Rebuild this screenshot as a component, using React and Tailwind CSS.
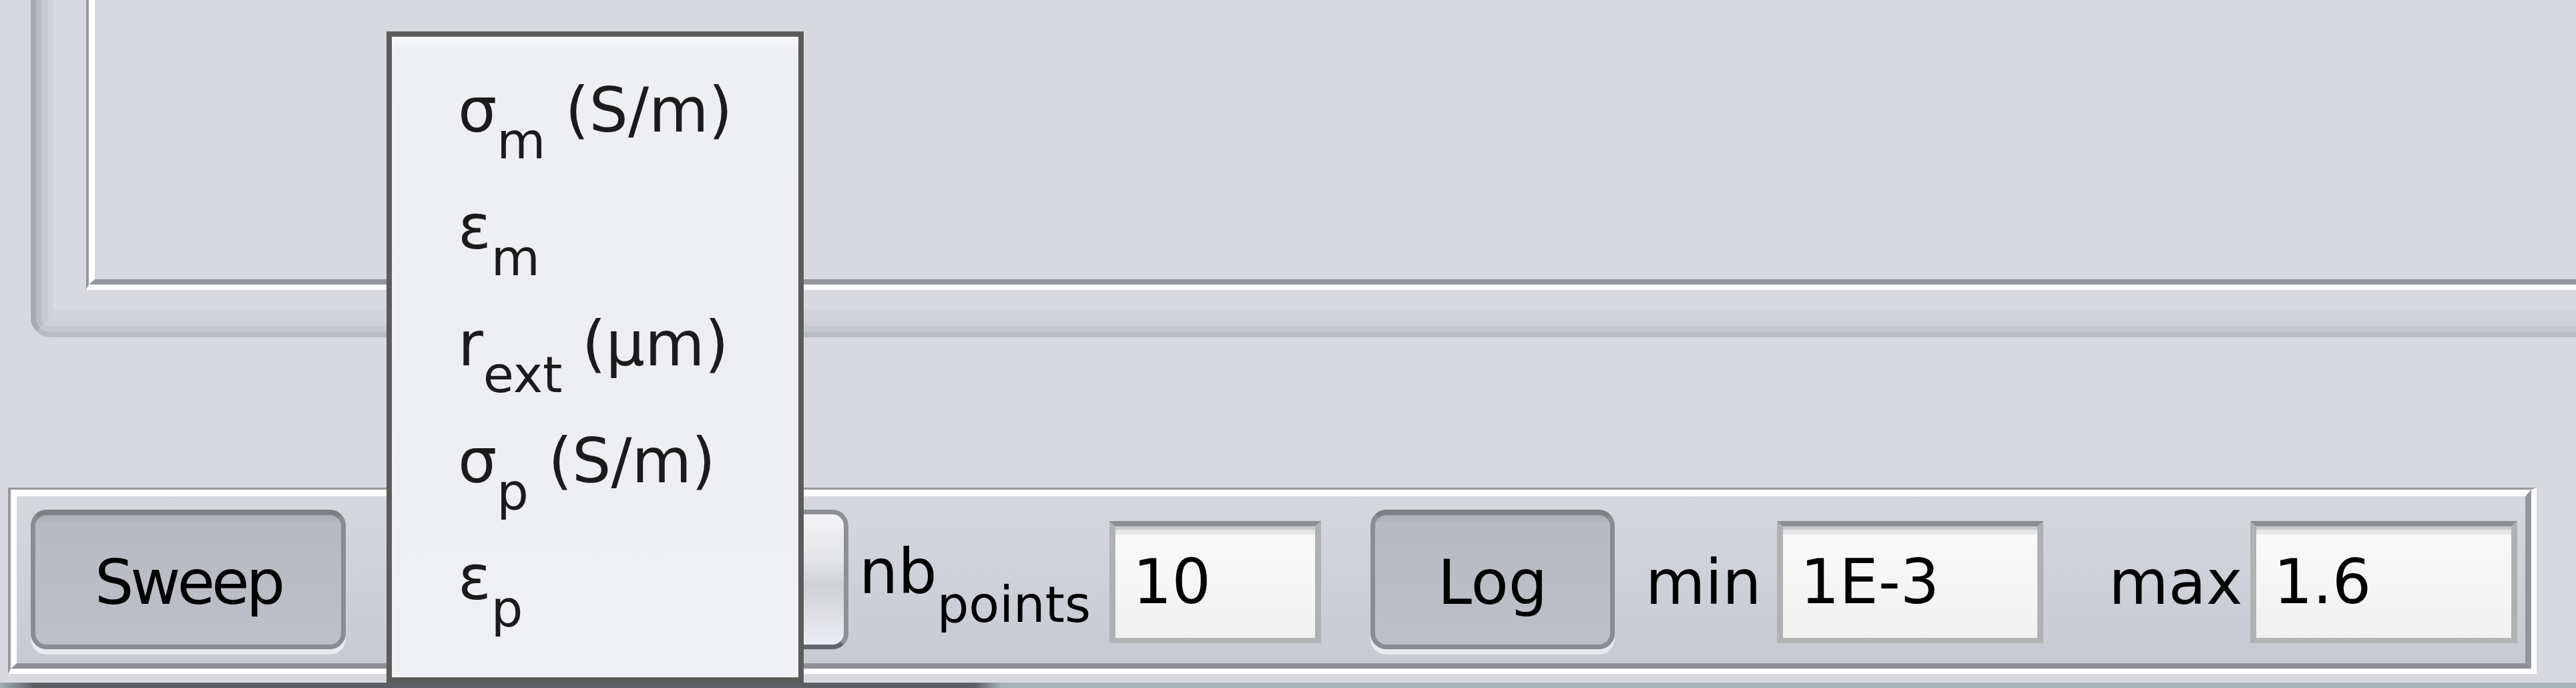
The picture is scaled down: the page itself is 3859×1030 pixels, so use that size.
const font = "font-['DejaVu_Sans',sans-serif]"

const Sub = ({ children }) => (
  <span className="relative top-[40px] text-[75px]">{children}</span>
)

const MenuItem = ({ children }) => (
  <div className="h-[175px] flex items-center pl-[99px] text-[92px] leading-none text-[#1b1b1b] whitespace-nowrap">
    <span>{children}</span>
  </div>
)

const AquaButton = ({ label, className = "" }) => (
  <div
    className={`h-[209px] mb-[8px] shrink-0 rounded-[24px] border-[7px] border-t-8 border-[#8a8c91] border-t-[#7d7f83] bg-[linear-gradient(to_bottom,#a9abb2_0px,#b8bac1_12px,#bec0c7_100%)] shadow-[0_8px_0_0_#e8eaed] flex items-center justify-center pt-[10px] text-[92px] leading-none text-black ${className}`}
  >
    {label}
  </div>
)

const Field = ({ value, className = "" }) => (
  <div
    className={`h-[183px] shrink-0 border-t-8 border-x-[9px] border-b-8 border-t-[#8e8f92] border-x-[#b0b1b3] border-b-[#b5b5b6] bg-[linear-gradient(to_bottom,#fafafa,#f1f1f0)] shadow-[inset_0_5px_0_#cacbcd,inset_0_12px_0_#e5e6e7] flex items-center pl-[26px] text-[92px] leading-none text-black ${className}`}
  >
    {value}
  </div>
)

const Label = ({ children, className = "" }) => (
  <div className={`h-[217px] shrink-0 flex items-center pt-[3px] text-[92px] leading-none text-black whitespace-nowrap ${className}`}>
    <span>{children}</span>
  </div>
)

export default function App() {
  return (
    <div className={`relative w-[3859px] h-[1030px] overflow-hidden bg-[#d8d9de] ${font}`}>
      {/* upper tab area with bevelled frame */}
      <div className="h-[505px] pl-[46px]">
        <div className="h-full rounded-bl-[30px] border-l-8 border-b-8 border-l-[#a9aab0] border-b-[#b9bbc2]">
          <div className="h-full rounded-bl-[22px] border-l-8 border-b-[9px] border-l-[#babcc3] border-b-[#c6c8ce]">
            <div className="h-full rounded-bl-[14px] border-l-[9px] border-b-8 border-l-[#c8c9d0] border-b-[#cfd0d6]">
              <div className="h-full rounded-bl-[6px] border-l-8 border-b-[17px] border-l-[#d0d1d6] border-b-[#d3d4da] pl-[50px] pb-[29px]">
                <div className="h-full border-l-4 border-b-8 border-l-[#95989d] border-b-white">
                  <div className="h-full border-l-[9px] border-b-8 border-l-white border-b-[#95989d] bg-[#d8d9de]" />
                </div>
              </div>
            </div>
          </div>
        </div>
      </div>

      {/* sweep control bar */}
      <div className="mt-[225px] ml-[12px] w-[3788px] h-[279px] border-l-4 border-t-[3px] border-r-8 border-b-8 border-l-[#95989d] border-t-[#95989d] border-r-white border-b-white">
        <div className="h-full border-l-[9px] border-t-[10px] border-r-[9px] border-b-8 border-l-white border-t-white border-r-[#93969b] border-b-[#8f9196] bg-[linear-gradient(to_bottom,#d6d8de,#c8cad2)] flex items-center pl-[21px] pt-[20px] pb-[13px]">
          <AquaButton label="Sweep" className="w-[472px] tracking-[-5px]" />

          <div className="ml-[63px] w-[690px] h-[209px] mb-[8px] shrink-0 rounded-[24px] border-[7px] border-[#8d9095] border-b-[#62656a] bg-[linear-gradient(to_bottom,#f3f3f5_0%,#e4e5e8_35%,#d0d1d5_55%,#dcdde2_75%,#eceef4_100%)]" />

          <Label className="ml-[16px] w-[375px] pt-0 pb-[33px]">
            nb<span className="relative top-[43px] text-[75px]">points</span>
          </Label>
          <Field value="10" className="w-[317px]" />

          <AquaButton label="Log" className="ml-[74px] w-[366px]" />

          <Label className="ml-[46px] w-[197px]">min</Label>
          <Field value="1E-3" className="w-[399px]" />

          <Label className="ml-[98px] w-[212px]">max</Label>
          <Field value="1.6" className="w-[400px]" />
        </div>
      </div>

      <div className="mt-[13px] h-[8px] bg-[linear-gradient(to_right,#a5aeb6_0px,#5c6064_50px,#5c6064_1460px,#a8b0b8_1500px,#a8b0b8_100%)]" />

      {/* open combo popup */}
      <div className="absolute left-[579px] top-[47px] w-[625px] h-[975px] border-8 border-[#5b5c59] bg-[linear-gradient(to_bottom,#f9fafc_0px,#eeeff3_20px,#edeef2_60%,#f0f1f4_100%)] pt-[23px]">
        <MenuItem>σ<Sub>m</Sub> (S/m)</MenuItem>
        <MenuItem>ε<Sub>m</Sub></MenuItem>
        <MenuItem>r<Sub>ext</Sub> (μm)</MenuItem>
        <MenuItem>σ<Sub>p</Sub> (S/m)</MenuItem>
        <MenuItem>ε<Sub>p</Sub></MenuItem>
      </div>
    </div>
  )
}
